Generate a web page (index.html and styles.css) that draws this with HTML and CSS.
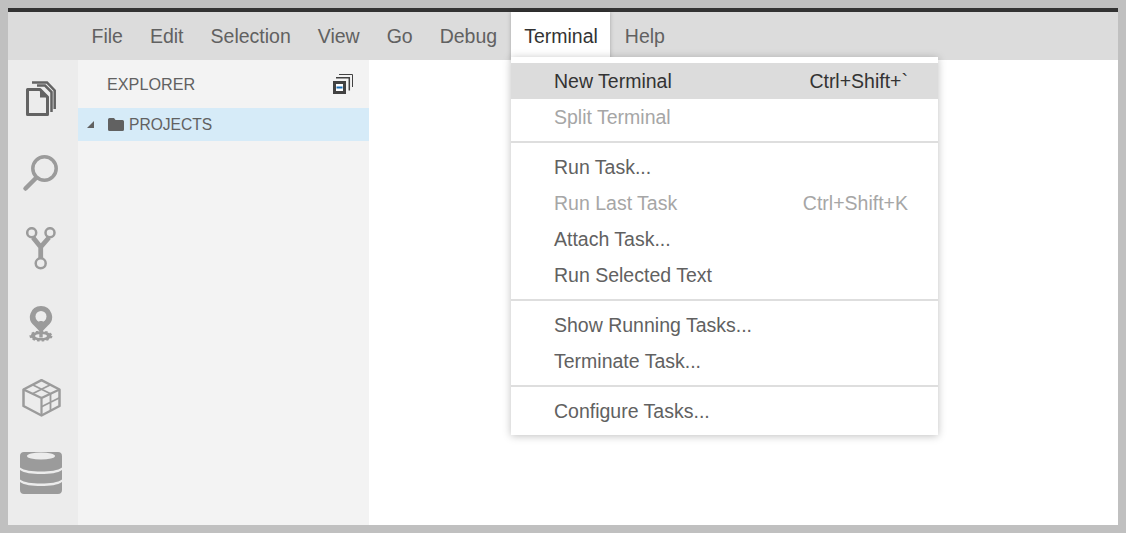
FILE: index.html
```html
<!DOCTYPE html>
<html lang="en">
<head>
    <meta charset="UTF-8">
    <title>Theia IDE</title>
    <link rel="stylesheet" href="styles.css">
</head>
<body>

<div class="frame">
    <div class="menubar">
        <span class="menubar-item">File</span>
        <span class="menubar-item">Edit</span>
        <span class="menubar-item">Selection</span>
        <span class="menubar-item">View</span>
        <span class="menubar-item">Go</span>
        <span class="menubar-item">Debug</span>
        <span class="menubar-item menubar-item-open">Terminal</span>
        <span class="menubar-item">Help</span>
    </div>

    <div class="workspace">
        <div class="activitybar">
            <!-- files -->
            <svg class="act-icon act-files" width="30" height="36" viewBox="0 0 30 36">
                <path d="M6 1.500H21L28.700 9.500V28" fill="none" stroke="#636363" stroke-width="2.500"/>
                <path d="M11 4.500H19L25.500 11V31" fill="none" stroke="#636363" stroke-width="2.500"/>
                <path d="M1.500 8.500H14L21.500 16V33.500H1.500Z" fill="#ececec" stroke="#636363" stroke-width="3" stroke-linejoin="round"/>
                <path d="M14 7.500L23 16.500H14Z" fill="#636363"/>
            </svg>
            <!-- search -->
            <svg class="act-icon act-search" width="37" height="37" viewBox="0 0 37 37">
                <circle cx="22.500" cy="13.500" r="11.700" fill="none" stroke="#9b9b9b" stroke-width="3.500"/>
                <path d="M14 23L3.500 33.500" fill="none" stroke="#9b9b9b" stroke-width="4.500" stroke-linecap="round"/>
            </svg>
            <!-- source control -->
            <svg class="act-icon act-git" width="30" height="43" viewBox="0 0 30 43">
                <circle cx="5.700" cy="5.700" r="4.500" fill="none" stroke="#9b9b9b" stroke-width="2.500"/>
                <circle cx="24" cy="5.700" r="4.500" fill="none" stroke="#9b9b9b" stroke-width="2.500"/>
                <circle cx="14.700" cy="36.300" r="5" fill="none" stroke="#9b9b9b" stroke-width="2.500"/>
                <path d="M7 10.500L14.700 20L23 10.500M14.700 19V31.500" fill="none" stroke="#9b9b9b" stroke-width="4.800"/>
            </svg>
            <!-- debug pin -->
            <svg class="act-icon act-pin" width="24" height="36" viewBox="0 0 24 36">
                <ellipse cx="12" cy="30" rx="10.500" ry="4.500" fill="#9b9b9b" stroke="#9b9b9b" stroke-width="2" stroke-dasharray="2.500 2"/>
                <ellipse cx="12" cy="30" rx="6" ry="2" fill="#ececec"/>
                <path d="M12 0A11 11 0 0 1 18.500 19.900L13.700 25V31.500H10.300V25L5.500 19.900A11 11 0 0 1 12 0Z" fill="#9b9b9b"/>
                <circle cx="12" cy="10.500" r="5.500" fill="#ececec"/>
                <path d="M10.300 15H13.700V22H10.300Z" fill="#9b9b9b"/>
            </svg>
            <!-- extensions -->
            <svg class="act-icon act-box" width="39" height="38" viewBox="0 0 39 38">
                <g fill="none" stroke="#9b9b9b" stroke-width="1.800">
                    <path d="M19.500 1.200L37.500 10.500V27L19.500 36.500L1.500 27V10.500Z" stroke-width="2.500" stroke-linejoin="round"/>
                    <path d="M1.500 10.500L19.500 19L37.500 10.500M19.500 19V36.500" stroke-width="2.200"/>
                    <path d="M10.500 5.800L28.500 14.800M28.500 5.800L10.500 14.800M28.500 14.800V31.800M19.500 27.700L37.500 18.700"/>
                </g>
            </svg>
            <!-- database -->
            <svg class="act-icon act-db" width="42" height="42" viewBox="0 0 42 42">
                <path d="M0 4C0 1.500 1.500 0 4 0H38C40.500 0 42 1.500 42 4V15.500C38 18.500 30 19.500 21 19.500S4 18.500 0 15.500Z" fill="#9b9b9b"/>
                <path d="M0 18C4 21 12 22 21 22S38 21 42 18V27.500C38 30.500 30 31.500 21 31.500S4 30.500 0 27.500Z" fill="#9b9b9b"/>
                <path d="M0 30C4 33 12 34 21 34S38 33 42 30V38C42 40.500 40.500 42 38 42H4C1.500 42 0 40.500 0 38Z" fill="#9b9b9b"/>
                <ellipse cx="21" cy="4" rx="14" ry="3.600" fill="#ececec"/>
            </svg>
        </div>

        <div class="sidebar">
            <div class="sidebar-head">
                <span class="sidebar-title">EXPLORER</span>
                <!-- collapse all -->
                <svg width="20" height="20" viewBox="0 0 20 20">
                    <path d="M6 .500H19.500V13" fill="none" stroke="#424242" stroke-width="1"/>
                    <path d="M3 3.700H16.300V16.500" fill="none" stroke="#424242" stroke-width="1.500"/>
                    <rect x="1.500" y="8.500" width="10" height="10" fill="#fff" stroke="#424242" stroke-width="3"/>
                    <rect x="3.500" y="12.500" width="6" height="2" fill="#1a6fb5"/>
                </svg>
            </div>
            <div class="tree-row">
                <span class="twistie"></span>
                <svg class="tree-folder" width="16" height="13" viewBox="0 0 16 13">
                    <path d="M1.500 0H6l1.500 2h7A1.500 1.500 0 0 1 16 3.500v8a1.500 1.500 0 0 1-1.500 1.500h-13A1.500 1.500 0 0 1 0 11.500v-10A1.500 1.500 0 0 1 1.500 0z" fill="#616161"/>
                </svg>
                <span>PROJECTS</span>
            </div>
        </div>

        <div class="editor"></div>
    </div>

    <div class="menu">
        <div class="menu-row menu-row-active"><span>New Terminal</span><span class="menu-key">Ctrl+Shift+`</span></div>
        <div class="menu-row menu-row-off"><span>Split Terminal</span></div>
        <div class="menu-sep"></div>
        <div class="menu-row"><span>Run Task...</span></div>
        <div class="menu-row menu-row-off"><span>Run Last Task</span><span class="menu-key">Ctrl+Shift+K</span></div>
        <div class="menu-row"><span>Attach Task...</span></div>
        <div class="menu-row"><span>Run Selected Text</span></div>
        <div class="menu-sep"></div>
        <div class="menu-row"><span>Show Running Tasks...</span></div>
        <div class="menu-row"><span>Terminate Task...</span></div>
        <div class="menu-sep"></div>
        <div class="menu-row"><span>Configure Tasks...</span></div>
    </div>
</div>

</body>
</html>
```

FILE: styles.css
```css
html, body {
    height: 100%;
}
body {
    margin: 0;
    padding: 8px;
    box-sizing: border-box;
    background-color: #c0c0c0;
    font-family: "Liberation Sans", Arial, sans-serif;
    overflow: hidden;
}
.frame {
    position: relative;
    height: 517px;
    box-sizing: border-box;
    display: flex;
    flex-direction: column;
    background-color: #fff;
    border-top: 4px solid #333;
}

/* top menu */
.menubar {
    height: 48px;
    flex: none;
    display: flex;
    padding-left: 70px;
    background-color: #dcdcdc;
    color: #616161;
    font-size: 19.5px;
}
.menubar-item {
    padding: 0 13.5px;
    line-height: 49px;
}
.menubar-item-open {
    position: relative;
    z-index: 2;
    padding-right: 12.5px;
    margin-right: 1px;
    background-color: #fff;
    color: #333;
    box-shadow: 0 0 4px rgba(0, 0, 0, 0.25);
}

.workspace {
    flex: 1;
    display: flex;
    min-height: 0;
}
.activitybar {
    width: 70px;
    flex: none;
    display: flex;
    flex-direction: column;
    align-items: center;
    background-color: #ececec;
}
.act-icon {
    display: block;
    flex: none;
    margin-left: -5px;
}
.act-files { margin-top: 21px; }
.act-search { margin-top: 38px; }
.act-git { margin-top: 35px; }
.act-pin { margin-top: 36px; margin-left: -4px; }
.act-box { margin-top: 37px; margin-left: -3px; }
.act-db { margin-top: 35px; margin-left: -4px; }

.sidebar {
    width: 291px;
    flex: none;
    background-color: #f3f3f3;
    color: #616161;
}
.sidebar-head {
    height: 48px;
    display: flex;
    align-items: center;
    justify-content: space-between;
    padding: 0 16px 0 29px;
}
.sidebar-title {
    font-size: 16.2px;
}
.tree-row {
    height: 33px;
    display: flex;
    align-items: center;
    background-color: #d6ebf8;
    font-size: 15.6px;
    padding-left: 9px;
}
.twistie {
    width: 0;
    height: 0;
    border-style: solid;
    border-width: 0 0 7px 7px;
    border-color: transparent transparent #616161 transparent;
    margin-right: 14px;
}
.tree-folder {
    margin-right: 5px;
}
.editor {
    flex: 1;
    background-color: #fff;
}

/* dropdown */
.menu {
    position: absolute;
    top: 45px;
    left: 503px;
    width: 427px;
    height: 378px;
    box-sizing: border-box;
    padding-top: 6px;
    background-color: #fff;
    color: #616161;
    font-size: 19.5px;
    box-shadow: 0 1px 8px rgba(0, 0, 0, 0.25);
    z-index: 3;
}
.menu-row {
    height: 36px;
    display: flex;
    align-items: center;
    justify-content: space-between;
    padding: 0 30px 0 43px;
}
.menu-row-active {
    background-color: #dcdcdc;
    color: #333;
}
.menu-row-off {
    color: #a6a6a6;
}
.menu-sep {
    height: 2px;
    margin: 6px 0;
    background-color: #dedede;
}
```
